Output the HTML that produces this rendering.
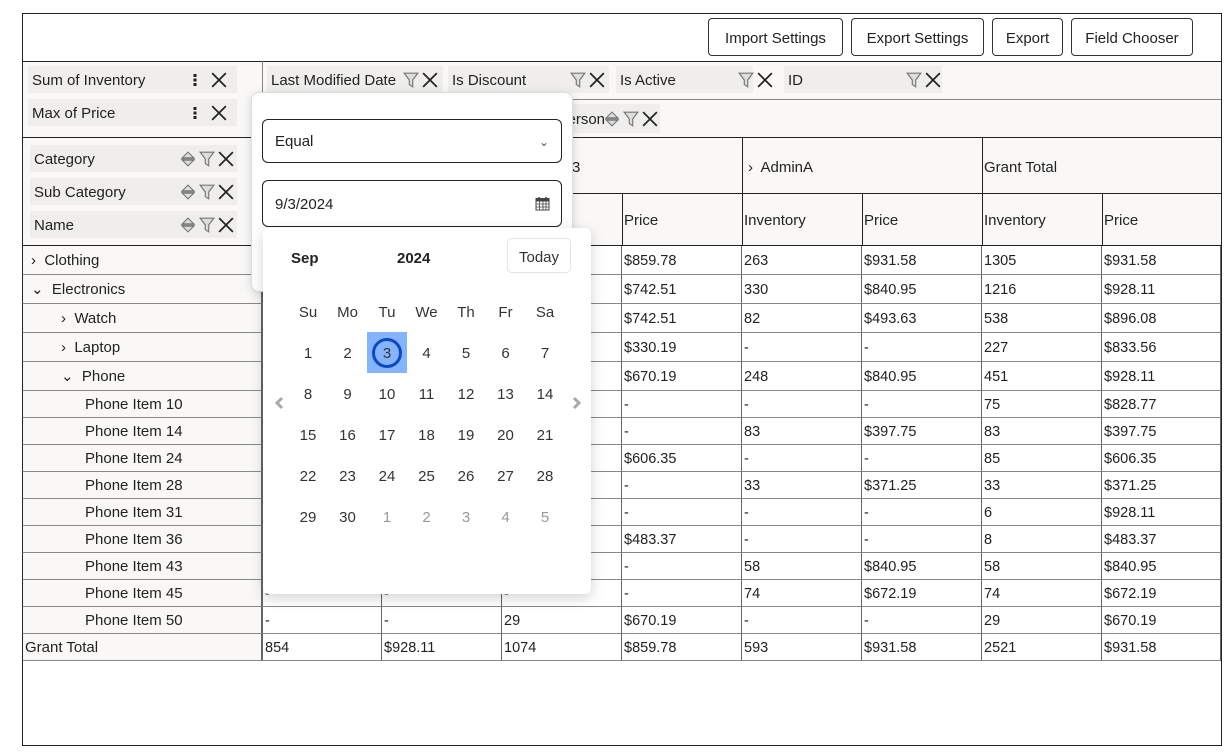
<!DOCTYPE html>
<html><head><meta charset="utf-8"><style>
*{box-sizing:border-box;margin:0;padding:0}
body{width:1231px;height:756px;background:#fff;font-family:"Liberation Sans",sans-serif;color:#222;position:relative;overflow:hidden}
.a{position:absolute}
.btn{position:absolute;top:18px;height:38px;border:1px solid #333;border-radius:4px;background:#fff;font-size:15px;line-height:39px;text-align:center;color:#222}
.chip{position:absolute;background:#efeeed;font-size:15px;line-height:29px;height:27px;padding-left:4px;color:#222}
.ic{position:absolute;top:0;height:27px;display:flex;align-items:center;gap:3px}
.cell{position:absolute;font-size:14.5px;padding-left:2px;padding-top:2px;border-right:1px solid #666;border-bottom:1px solid #888;white-space:nowrap;background:#fff}
.rh{background:#f9f8f7}
.cal span{position:absolute;width:40px;text-align:center;font-size:15px;color:#333}
</style></head><body>
<div class="a" style="left:22px;top:13px;width:1200px;height:733px;border:1px solid #222;"></div>
<div class="a" style="left:23px;top:61px;width:1198px;height:185px;background:#f9f8f7;border-top:1px solid #222"></div>
<div class="btn" style="left:708px;width:135px">Import Settings</div>
<div class="btn" style="left:851px;width:133px">Export Settings</div>
<div class="btn" style="left:992px;width:71px">Export</div>
<div class="btn" style="left:1071px;width:122px">Field Chooser</div>
<div class="a" style="left:262px;top:61px;width:1px;height:77px;background:#888"></div>
<div class="a" style="left:262px;top:99px;width:959px;height:1px;background:#888"></div>
<div class="a" style="left:23px;top:137px;width:1198px;height:1px;background:#222"></div>
<svg width="0" height="0" style="position:absolute"><defs>
<symbol id="x" viewBox="0 0 14 14"><path d="M1 1L13 13M13 1L1 13" stroke="#222" stroke-width="1.5"/></symbol>
<symbol id="f" viewBox="0 0 14 14"><path d="M1 1H13L8.5 7V13L5.5 11V7Z" fill="#ddd" stroke="#777" stroke-width="1"/></symbol>
<symbol id="s" viewBox="0 0 14 14"><path d="M2 6L7 1L12 6Z M2 8L7 13L12 8Z" fill="#ddd" stroke="#777"/><path d="M1 7H13" stroke="#777"/></symbol>
<symbol id="d" viewBox="0 0 14 14"><rect x="5.5" y="1" width="3" height="3" fill="#222"/><rect x="5.5" y="5.5" width="3" height="3" fill="#222"/><rect x="5.5" y="10" width="3" height="3" fill="#222"/></symbol>
</defs></svg>
<div class="chip" style="left:28px;top:66px;width:209px">Sum of Inventory<div class="ic" style="left:160px"><svg width="14" height="14"><use href="#d"/></svg><svg width="16" height="16" style="margin-left:6px"><use href="#x"/></svg></div></div>
<div class="chip" style="left:28px;top:99px;width:209px">Max of Price<div class="ic" style="left:160px"><svg width="14" height="14"><use href="#d"/></svg><svg width="16" height="16" style="margin-left:6px"><use href="#x"/></svg></div></div>
<div class="chip" style="left:267px;top:66px;width:176px">Last Modified Date<div class="ic" style="left:136px"><svg width="16" height="16"><use href="#f"/></svg><svg width="16" height="16"><use href="#x"/></svg></div></div>
<div class="chip" style="left:448px;top:66px;width:161px">Is Discount<div class="ic" style="left:122px"><svg width="16" height="16"><use href="#f"/></svg><svg width="16" height="16"><use href="#x"/></svg></div></div>
<div class="chip" style="left:616px;top:66px;width:137px">Is Active<div class="ic" style="left:122px"><svg width="16" height="16"><use href="#f"/></svg><svg width="16" height="16"><use href="#x"/></svg></div></div>
<div class="chip" style="left:784px;top:66px;width:158px">ID<div class="ic" style="left:122px"><svg width="16" height="16"><use href="#f"/></svg><svg width="16" height="16"><use href="#x"/></svg></div></div>
<div class="chip" style="left:500px;top:104px;width:160px;height:29px;line-height:31px;text-align:right;padding-right:55px">Sales Person<div class="ic" style="left:104px;height:29px"><svg width="16" height="16"><use href="#s"/></svg><svg width="16" height="16"><use href="#f"/></svg><svg width="16" height="16"><use href="#x"/></svg></div></div>
<div class="chip" style="left:30px;top:145px;width:207px">Category<div class="ic" style="left:150px"><svg width="16" height="16"><use href="#s"/></svg><svg width="16" height="16"><use href="#f"/></svg><svg width="16" height="16"><use href="#x"/></svg></div></div>
<div class="chip" style="left:30px;top:178px;width:207px">Sub Category<div class="ic" style="left:150px"><svg width="16" height="16"><use href="#s"/></svg><svg width="16" height="16"><use href="#f"/></svg><svg width="16" height="16"><use href="#x"/></svg></div></div>
<div class="chip" style="left:30px;top:211px;width:207px">Name<div class="ic" style="left:150px"><svg width="16" height="16"><use href="#s"/></svg><svg width="16" height="16"><use href="#f"/></svg><svg width="16" height="16"><use href="#x"/></svg></div></div>
<div class="a" style="left:262px;top:138px;width:1px;height:108px;background:#222"></div>
<div class="a" style="left:502px;top:138px;width:1px;height:108px;background:#222"></div>
<div class="a" style="left:742px;top:138px;width:1px;height:108px;background:#222"></div>
<div class="a" style="left:982px;top:138px;width:1px;height:108px;background:#222"></div>
<div class="a" style="left:262px;top:193px;width:959px;height:1px;background:#222"></div>
<div class="a" style="left:23px;top:245px;width:1198px;height:1px;background:#222"></div>
<div class="a" style="left:382px;top:193px;width:1px;height:53px;background:#222"></div>
<div class="a" style="left:622px;top:193px;width:1px;height:53px;background:#222"></div>
<div class="a" style="left:862px;top:193px;width:1px;height:53px;background:#222"></div>
<div class="a" style="left:1102px;top:193px;width:1px;height:53px;background:#222"></div>
<div class="a" style="left:572px;top:159px;font-size:15px">3</div>
<div class="a" style="left:748px;top:159px;font-size:15px">›&nbsp; AdminA</div>
<div class="a" style="left:984px;top:159px;font-size:15px">Grant Total</div>
<div class="a" style="left:624px;top:212px;font-size:15px">Price</div>
<div class="a" style="left:744px;top:212px;font-size:15px">Inventory</div>
<div class="a" style="left:864px;top:212px;font-size:15px">Price</div>
<div class="a" style="left:984px;top:212px;font-size:15px">Inventory</div>
<div class="a" style="left:1104px;top:212px;font-size:15px">Price</div>
<div id="t"></div>
<script>
var rows=[
["›&nbsp; Clothing",8,29,"-","-","-","$859.78","263","$931.58","1305","$931.58"],
["⌄&nbsp; Electronics",8,29,"-","-","-","$742.51","330","$840.95","1216","$928.11"],
["›&nbsp; Watch",38,29,"-","-","-","$742.51","82","$493.63","538","$896.08"],
["›&nbsp; Laptop",38,29,"-","-","-","$330.19","-","-","227","$833.56"],
["⌄&nbsp; Phone",38,29,"-","-","-","$670.19","248","$840.95","451","$928.11"],
["Phone Item 10",62,27,"-","-","-","-","-","-","75","$828.77"],
["Phone Item 14",62,27,"-","-","-","-","83","$397.75","83","$397.75"],
["Phone Item 24",62,27,"-","-","-","$606.35","-","-","85","$606.35"],
["Phone Item 28",62,27,"-","-","-","-","33","$371.25","33","$371.25"],
["Phone Item 31",62,27,"-","-","-","-","-","-","6","$928.11"],
["Phone Item 36",62,27,"-","-","-","$483.37","-","-","8","$483.37"],
["Phone Item 43",62,27,"-","-","-","-","58","$840.95","58","$840.95"],
["Phone Item 45",62,27,"-","-","-","-","74","$672.19","74","$672.19"],
["Phone Item 50",62,27,"-","-","29","$670.19","-","-","29","$670.19"],
["Grant Total",2,27,"854","$928.11","1074","$859.78","593","$931.58","2521","$931.58"]];
var h="",y=246;
rows.forEach(function(r){
 h+='<div class="cell rh" style="left:22px;top:'+y+'px;width:240px;height:'+r[2]+'px;line-height:'+(r[2]-3)+'px;padding-left:'+r[1]+'px;border-left:1px solid #222;font-size:15px">'+r[0]+'</div>';
 for(var i=0;i<8;i++){h+='<div class="cell" style="left:'+(262+i*120)+'px;top:'+y+'px;width:'+(i==7?119:120)+'px;height:'+r[2]+'px;line-height:'+(r[2]-3)+'px;border-left:'+(i==0?'1px solid #666':'0')+'">'+r[3+i]+'</div>';}
 y+=r[2];});
document.getElementById('t').innerHTML=h;
</script>
<div class="a" style="left:251px;top:92px;width:322px;height:200px;background:#fff;border:1px solid #ddd;border-radius:8px;box-shadow:0 2px 10px rgba(0,0,0,.15)"></div>
<div class="a" style="left:262px;top:119px;width:300px;height:44px;border:1px solid #222;border-radius:6px;background:#fff;font-size:15px;line-height:44px;padding-left:12px">Equal<span style="position:absolute;right:12px;top:0;font-size:12px;color:#555">⌄</span></div>
<div class="a" style="left:262px;top:180px;width:300px;height:47px;border:1px solid #222;border-radius:6px;background:#fff;font-size:15px;line-height:47px;padding-left:12px">9/3/2024
<svg class="a" style="left:272px;top:15px" width="15" height="15" viewBox="0 0 15 15"><rect x="1" y="2.5" width="13" height="11.5" fill="none" stroke="#444"/><rect x="1" y="2.5" width="13" height="3" fill="#444"/><path d="M1 8H14M1 11H14M4.5 5V14M8 5V14M11 5V14" stroke="#444" stroke-width=".8"/><path d="M4 1V4M11 1V4" stroke="#444" stroke-width="1.5"/></svg></div>
<div class="a cal" style="left:263px;top:228px;width:328px;height:366px;background:#fff;border-radius:6px;box-shadow:0 4px 14px rgba(0,0,0,.18)">
<div class="a" style="left:28px;top:22px;font-weight:bold;font-size:15px;color:#222">Sep</div>
<div class="a" style="left:134px;top:22px;font-weight:bold;font-size:15px;color:#222">2024</div>
<div class="a" style="left:244px;top:10px;width:64px;height:35px;border:1px solid #e3e3e3;border-radius:5px;font-size:15px;line-height:37px;text-align:center;color:#333">Today</div>
<svg class="a" style="left:10px;top:168px" width="12" height="14" viewBox="0 0 12 14"><path d="M9 2L4 7L9 12" fill="none" stroke="#aaa" stroke-width="3"/></svg>
<svg class="a" style="left:308px;top:168px" width="12" height="14" viewBox="0 0 12 14"><path d="M3 2L8 7L3 12" fill="none" stroke="#aaa" stroke-width="3"/></svg>
<div class="a" style="left:104px;top:104px;width:40px;height:41px;background:#85b4ff"></div>
<div class="a" style="left:109px;top:110px;width:30px;height:30px;border:3px solid #0b49c4;border-radius:50%"></div>
<div id="c"></div>
</div>
<script>
var d=["Su","Mo","Tu","We","Th","Fr","Sa"],c="";
d.forEach(function(t,i){c+='<span style="left:'+(25+i*39.5)+'px;top:76px">'+t+'</span>';});
var n=[];for(var i=1;i<=30;i++)n.push([i,0]);for(i=1;i<=5;i++)n.push([i,1]);
n.forEach(function(v,k){var col=k%7,row=Math.floor(k/7);c+='<span style="left:'+(25+col*39.5)+'px;top:'+(117+row*41)+'px;'+(v[1]?'color:#999':'')+'">'+v[0]+'</span>';});
document.getElementById('c').innerHTML=c;
</script>
</body></html>
